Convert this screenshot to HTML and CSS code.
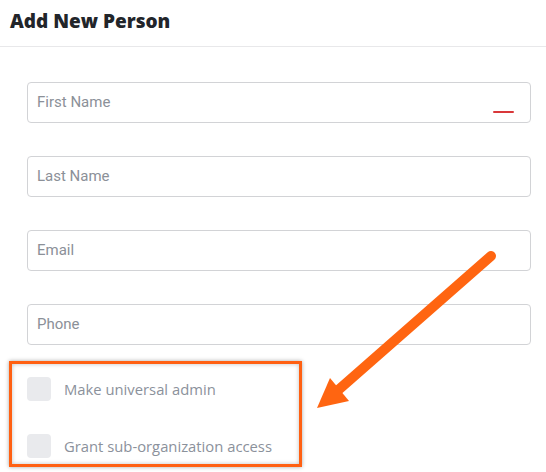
FILE: index.html
```html
<!DOCTYPE html>
<html>
<head>
<meta charset="utf-8">
<link rel="stylesheet" href="styles.css">
</head>
<body>
<div class="page">
  <header class="header"><h1 class="title">Add New Person</h1></header>
  <form class="form">
    <div class="field"><span class="ph">First Name</span><span class="err"></span></div>
    <div class="field"><span class="ph">Last Name</span></div>
    <div class="field"><span class="ph">Email</span></div>
    <div class="field"><span class="ph">Phone</span></div>
    <div class="checks">
      <label class="check"><span class="box"></span><span class="lbl">Make universal admin</span></label>
      <label class="check"><span class="box"></span><span class="lbl">Grant sub-organization access</span></label>
    </div>
  </form>
  <div class="highlight"></div>
  <svg class="arrow" width="546" height="472" viewBox="0 0 546 472">
    <line x1="491" y1="256" x2="336" y2="392" stroke="#ff6511" stroke-width="10" stroke-linecap="round"/>
    <polygon points="317,408 330,378 349,401" fill="#ff6511"/>
  </svg>
</div>
</body>
</html>
```
FILE: styles.css
```css
* { box-sizing: border-box; }
html, body { margin: 0; padding: 0; background: #fff; }
body { font-family: "Open Sans", Lato, sans-serif; }
.page { position: relative; width: 546px; height: 472px; overflow: hidden; }
.header { height: 47px; border-bottom: 1px solid #e8e8ea; padding: 8px 0 0 10px; }
.title { margin: 0; font-family: "Open Sans", sans-serif; font-size: 19px; font-weight: 800; color: #22252a; line-height: 26px; letter-spacing: 0; }
.form { display: flex; flex-direction: column; padding: 35px 15px 0 27px; }
.field { position: relative; height: 41px; border: 1px solid #d2d3d6; border-radius: 4px; margin-bottom: 33px; padding: 7px 0 0 9px; }
.ph { font-family: Roboto, sans-serif; font-size: 15px; color: #8b9098; line-height: 18px; }
.err { position: absolute; right: 16px; top: 28px; width: 21px; height: 2px; background: #d9383a; border-radius: 1px; }
.checks { display: flex; flex-direction: column; gap: 33px; margin-top: -1px; }
.check { display: flex; align-items: center; gap: 13px; height: 24px; }
.box { width: 24px; height: 24px; border-radius: 4px; background: #e9eaed; flex: none; }
.lbl { font-size: 14.8px; color: #8b919b; }
.highlight { position: absolute; left: 9px; top: 361px; width: 293px; height: 106px; border: 3px solid #ff6012; box-shadow: 0 0 4px rgba(0,0,0,0.35), inset 0 0 4px rgba(0,0,0,0.25); }
.arrow { position: absolute; left: 0; top: 0; }
```
